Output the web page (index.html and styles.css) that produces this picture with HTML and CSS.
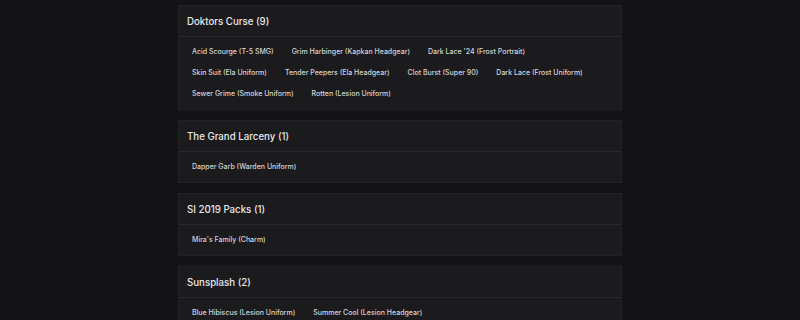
FILE: index.html
```html
<!DOCTYPE html>
<html lang="en">
<head>
    <meta charset="UTF-8">
    <meta name="viewport" content="width=device-width, initial-scale=1.0">
    <title>Bundles</title>
    <link rel="stylesheet" href="styles.css">
</head>
<body>
    <div class="container">
        <div class="bundle">
            <div class="bundle-header">Doktors Curse (9)</div>
            <div class="bundle-items">
                <span class="item">Acid Scourge (T-5 SMG)</span>
                <span class="item">Grim Harbinger (Kapkan Headgear)</span>
                <span class="item">Dark Lace '24 (Frost Portrait)</span>
                <span class="item">Skin Suit (Ela Uniform)</span>
                <span class="item">Tender Peepers (Ela Headgear)</span>
                <span class="item">Clot Burst (Super 90)</span>
                <span class="item">Dark Lace (Frost Uniform)</span>
                <span class="item">Sewer Grime (Smoke Uniform)</span>
                <span class="item">Rotten (Lesion Uniform)</span>
            </div>
        </div>
        <div class="bundle">
            <div class="bundle-header">The Grand Larceny (1)</div>
            <div class="bundle-items">
                <span class="item">Dapper Garb (Warden Uniform)</span>
            </div>
        </div>
        <div class="bundle">
            <div class="bundle-header">SI 2019 Packs (1)</div>
            <div class="bundle-items">
                <span class="item">Mira's Family (Charm)</span>
            </div>
        </div>
        <div class="bundle">
            <div class="bundle-header">Sunsplash (2)</div>
            <div class="bundle-items">
                <span class="item">Blue Hibiscus (Lesion Uniform)</span>
                <span class="item">Summer Cool (Lesion Headgear)</span>
            </div>
        </div>
    </div>
</body>
</html>
```
FILE: styles.css
```css
body {
    margin: 0;
    padding: 0;
    font-family: Inter, "Noto Sans", sans-serif;
    background-color: #131214;
    color: #e8e8e8;
}

.container {
    width: 444px;
    margin: 0 auto;
    padding-top: 5px;
}

/* Bundle card */
.bundle {
    background-color: #1b1a1d;
    border: 1px solid #222124;
    margin-bottom: 10px;
}

.bundle-header {
    padding: 10px 8px 8px;
    font-size: 9.7px;
    line-height: 12px;
    font-weight: 500;
    border-bottom: 1px solid #29282b;
}

.bundle-items {
    display: flex;
    flex-wrap: wrap;
    column-gap: 18px;
    padding: 4px 13px 5px;
}

.item {
    font-size: 7px;
    line-height: 21px;
    font-weight: 500;
    color: #d6d6d6;
}
```
